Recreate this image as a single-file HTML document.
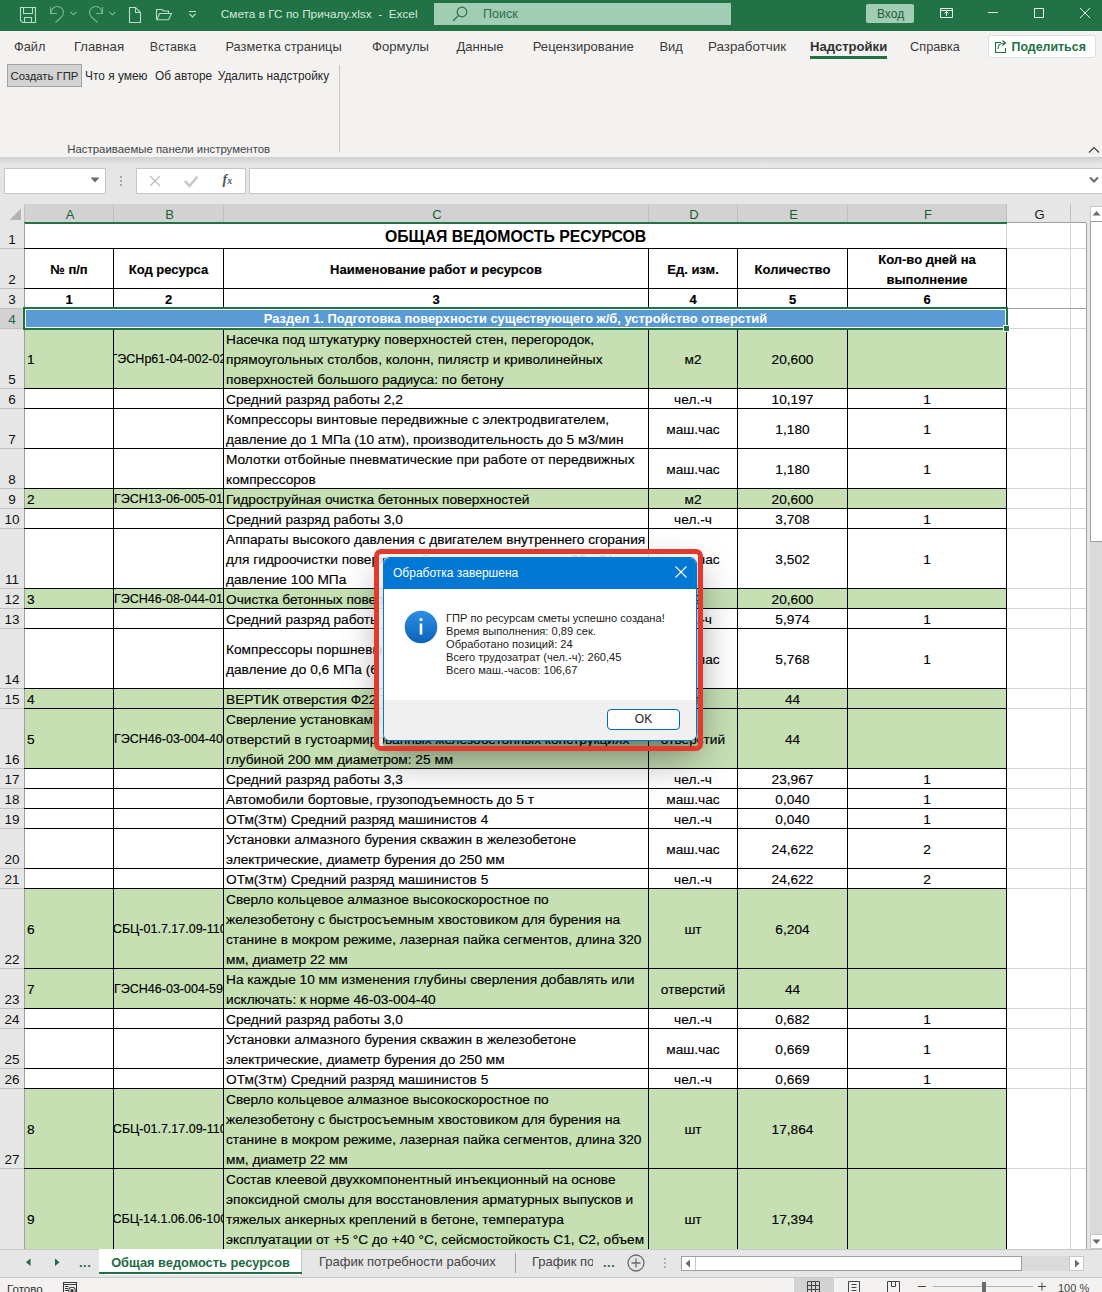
<!DOCTYPE html><html><head><meta charset="utf-8"><style>
*{box-sizing:border-box;margin:0;padding:0}
html,body{width:1102px;height:1292px;overflow:hidden;background:#fff}
body{position:relative;font-family:"Liberation Sans",sans-serif;color:#000}
.a{position:absolute}
.t{position:absolute;white-space:nowrap}
.cell{position:absolute;overflow:hidden;display:flex;flex-direction:column;justify-content:center}
.cell div{white-space:nowrap;height:20px;line-height:21px;font-size:13.7px;-webkit-text-stroke:0.15px #000}
.c div{display:flex;justify-content:center}
.b div{font-weight:bold;font-size:13px}
.code div{font-size:12.5px}
.hl{position:absolute;height:1px;background:#000}
.vl{position:absolute;width:1px;background:#000}

</style></head><body>
<div class="a" style="left:0;top:0;width:1102px;height:31px;background:#217346"></div>
<svg class="a" style="left:0;top:0" width="220" height="31" viewBox="0 0 220 31" fill="none" stroke-width="1.1">
<path d="M20.5 7.5H35.5V22.5H22.5L20.5 20.5Z" stroke="#b9dcc6"/>
<path d="M23.5 7.5V13.5H32.5V7.5" stroke="#b9dcc6"/>
<path d="M24.5 22.5V17.5H31.5V22.5" stroke="#b9dcc6"/>
<path d="M50.5 7V13.5H57" stroke="#7db593"/><path d="M51 13A6 6 0 0 1 63.5 12.5A6 6 0 0 1 61.5 17L55.5 22.5" stroke="#7db593"/>
<path d="M70.5 12L73.4 14.8L76.3 12" stroke="#7db593"/>
<path d="M102.5 7V13.5H96" stroke="#7db593"/><path d="M102 13A6 6 0 0 0 89.5 12.5A6 6 0 0 0 91.5 17L97.5 22.5" stroke="#7db593"/>
<path d="M109.5 12L112.4 14.8L115.3 12" stroke="#7db593"/>
<path d="M129.5 7.5H135.5L140.5 12.5V22.5H129.5Z" stroke="#b9dcc6"/><path d="M135.5 7.5V12.5H140.5" stroke="#b9dcc6"/>
<path d="M156.5 19.5V9.5H162L163.5 11H168.5V13.3" stroke="#b9dcc6"/><path d="M157 19.8L159.5 13.5H171.5L168.5 19.8Z" stroke="#b9dcc6"/>
<path d="M189 11.5H196" stroke="#b9dcc6"/><path d="M189.5 14L192.5 17L195.5 14" stroke="#b9dcc6"/>
</svg>
<div class="t" style="left:220.8px;top:6px;font-size:11.8px;line-height:16px;color:#d6e8dd">Смета в ГС по Причалу.xlsx&nbsp; -&nbsp; Excel</div>
<div class="a" style="left:434px;top:3px;width:297px;height:22px;background:#a0cdb4"></div>
<svg class="a" style="left:450px;top:5px" width="20" height="18" viewBox="0 0 20 18" fill="none" stroke="#2c6e49" stroke-width="1.2"><circle cx="12" cy="7" r="4.8"/><path d="M8.6 10.4L3 16"/></svg>
<div class="t" style="left:483px;top:6px;font-size:12.5px;line-height:16px;color:#2c6e49">Поиск</div>
<div class="a" style="left:866px;top:4px;width:48px;height:19px;background:#a0cdb4;border-radius:2px"></div>
<div class="t" style="left:877px;top:6px;font-size:12px;line-height:16px;color:#1f5c3a">Вход</div>
<svg class="a" style="left:930px;top:0" width="172" height="31" viewBox="930 0 172 31" fill="none" stroke="#e6f0ea" stroke-width="1">
<path d="M940.5 8.5h12v9h-12z"/><path d="M940.5 10.5h12"/><path d="M946.5 16v-4.5M944.5 13.5l2-2l2 2"/>
<path d="M988 12.5h10"/>
<path d="M1034.5 8.5h9v9h-9z"/>
<path d="M1080 8l10 10M1090 8l-10 10"/>
</svg>
<div class="a" style="left:0;top:31px;width:1102px;height:126px;background:#f3f2f1"></div>
<div class="t" style="left:14.0px;top:38.5px;font-size:12.8px;line-height:16px;color:#3b3a39">Файл</div>
<div class="t" style="left:73.9px;top:38.5px;font-size:13.2px;line-height:16px;color:#3b3a39">Главная</div>
<div class="t" style="left:149.8px;top:38.5px;font-size:12.5px;line-height:16px;color:#3b3a39">Вставка</div>
<div class="t" style="left:225.5px;top:38.5px;font-size:12.8px;line-height:16px;color:#3b3a39">Разметка страницы</div>
<div class="t" style="left:372.0px;top:38.5px;font-size:13.1px;line-height:16px;color:#3b3a39">Формулы</div>
<div class="t" style="left:456.5px;top:38.5px;font-size:13px;line-height:16px;color:#3b3a39">Данные</div>
<div class="t" style="left:532.7px;top:38.5px;font-size:13.1px;line-height:16px;color:#3b3a39">Рецензирование</div>
<div class="t" style="left:659.5px;top:38.5px;font-size:12.9px;line-height:16px;color:#3b3a39">Вид</div>
<div class="t" style="left:708.0px;top:38.5px;font-size:13.4px;line-height:16px;color:#3b3a39">Разработчик</div>
<div class="t" style="left:910.1px;top:38.5px;font-size:12.7px;line-height:16px;color:#3b3a39">Справка</div>
<div class="t" style="left:810px;top:38.5px;font-size:13.1px;line-height:16px;color:#323130;font-weight:bold">Надстройки</div>
<div class="a" style="left:810px;top:56px;width:77px;height:3px;background:#1e7145"></div>
<div class="a" style="left:987.5px;top:34.5px;width:108px;height:23.5px;background:#fff;border:1px solid #e1dfdd;border-radius:3px"></div>
<svg class="a" style="left:994px;top:38px" width="14" height="16" viewBox="0 0 14 16" fill="none" stroke="#1e7145" stroke-width="1.1"><path d="M7 4.5H1.5v10h10V10"/><path d="M4 11c0-4 3-6 7-6M8.5 2.5L11.5 5L8.5 7.5"/></svg>
<div class="t" style="left:1011.5px;top:39px;font-size:12.4px;line-height:16px;color:#1e7145;font-weight:bold">Поделиться</div>
<div class="a" style="left:7px;top:64px;width:75px;height:23px;background:#d2d2d2;border:1px solid #a3a3a3"></div>
<div class="t" style="left:10.5px;top:67.5px;font-size:11.3px;line-height:16px;color:#262626">Создать ГПР</div>
<div class="t" style="left:85px;top:67.5px;font-size:11.9px;line-height:16px;color:#262626">Что я умею</div>
<div class="t" style="left:155px;top:67.5px;font-size:11.9px;line-height:16px;color:#262626">Об авторе</div>
<div class="t" style="left:217.8px;top:67.5px;font-size:11.9px;line-height:16px;color:#262626">Удалить надстройку</div>
<div class="t" style="left:67.3px;top:142px;font-size:11.4px;line-height:14px;color:#444">Настраиваемые панели инструментов</div>
<div class="a" style="left:339px;top:65px;width:1px;height:87px;background:#c8c6c4"></div>
<svg class="a" style="left:1088px;top:146px" width="12" height="8" viewBox="0 0 12 8" fill="none" stroke="#3b3a39" stroke-width="1.1"><path d="M1 6.5L6 1.5L11 6.5"/></svg>
<div class="a" style="left:0;top:157px;width:1102px;height:47px;background:#e6e6e6"></div>
<div class="a" style="left:0;top:157px;width:1102px;height:7px;background:linear-gradient(#cfcfcf,#e6e6e6)"></div>
<div class="a" style="left:4px;top:168px;width:102px;height:26px;background:#fff;border:1px solid #c6c6c6"></div>
<svg class="a" style="left:90px;top:177px" width="11" height="6" viewBox="0 0 11 6"><path d="M0.5 0.5h9l-4.5 5z" fill="#6b6b6b"/></svg>
<div class="a" style="left:120px;top:176px;width:2px;height:2px;background:#a6a6a6"></div><div class="a" style="left:120px;top:180px;width:2px;height:2px;background:#a6a6a6"></div><div class="a" style="left:120px;top:184px;width:2px;height:2px;background:#a6a6a6"></div>
<div class="a" style="left:136px;top:168px;width:110px;height:26px;background:#fff;border:1px solid #c6c6c6"></div>
<svg class="a" style="left:136px;top:168px" width="110" height="26" viewBox="0 0 110 26" fill="none" stroke-width="1.3"><path d="M14 8l10 10M24 8l-10 10" stroke="#bdbdbd"/><path d="M49 13L53.5 18L61.5 8.5" stroke="#c8c8c8" stroke-width="2.6"/></svg>
<div class="t" style="left:222.5px;top:172px;font-family:'Liberation Serif',serif;font-style:italic;font-weight:bold;font-size:14px;line-height:16px;color:#555">f<span style="font-size:10px">x</span></div>
<div class="a" style="left:249px;top:168px;width:860px;height:26px;background:#fff;border:1px solid #c6c6c6"></div>
<svg class="a" style="left:1088px;top:176px" width="12" height="8" viewBox="0 0 12 8" fill="none" stroke="#6b6b6b" stroke-width="2"><path d="M2 1.5L6 5.5L10 1.5"/></svg>
<div class="a" style="left:0;top:204px;width:1087px;height:19px;background:#e6e6e6"></div>
<div class="a" style="left:0;top:223px;width:24px;height:1px;background:#bfbfbf"></div>
<div class="a" style="left:25px;top:204px;width:981px;height:18px;background:#d2d2d2"></div>
<svg class="a" style="left:0;top:204px" width="24" height="19" viewBox="0 0 24 19"><path d="M21 4.5V16H9.5z" fill="#b4b4b4"/></svg>
<div class="t" style="left:25.5px;top:207px;width:89px;text-align:center;font-size:13px;line-height:16px;color:#185f38">A</div>
<div class="t" style="left:114.5px;top:207px;width:110px;text-align:center;font-size:13px;line-height:16px;color:#185f38">B</div>
<div class="t" style="left:224.5px;top:207px;width:425px;text-align:center;font-size:13px;line-height:16px;color:#185f38">C</div>
<div class="t" style="left:649.5px;top:207px;width:89px;text-align:center;font-size:13px;line-height:16px;color:#185f38">D</div>
<div class="t" style="left:738.5px;top:207px;width:110px;text-align:center;font-size:13px;line-height:16px;color:#185f38">E</div>
<div class="t" style="left:848.5px;top:207px;width:159px;text-align:center;font-size:13px;line-height:16px;color:#185f38">F</div>
<div class="t" style="left:1007.5px;top:207px;width:64px;text-align:center;font-size:13px;line-height:16px;color:#222">G</div>
<div class="a" style="left:24px;top:204px;width:1px;height:19px;background:#bfbfbf"></div>
<div class="a" style="left:113px;top:204px;width:1px;height:19px;background:#bfbfbf"></div>
<div class="a" style="left:223px;top:204px;width:1px;height:19px;background:#bfbfbf"></div>
<div class="a" style="left:648px;top:204px;width:1px;height:19px;background:#bfbfbf"></div>
<div class="a" style="left:737px;top:204px;width:1px;height:19px;background:#bfbfbf"></div>
<div class="a" style="left:847px;top:204px;width:1px;height:19px;background:#bfbfbf"></div>
<div class="a" style="left:1006px;top:204px;width:1px;height:19px;background:#bfbfbf"></div>
<div class="a" style="left:1070px;top:204px;width:1px;height:19px;background:#bfbfbf"></div>
<div class="a" style="left:24px;top:222px;width:983px;height:2px;background:#217346"></div>
<div class="a" style="left:1007px;top:222px;width:79px;height:1px;background:#9e9e9e"></div>
<div class="a" style="left:0;top:223px;width:24px;height:1026px;background:#e6e6e6"></div>
<div class="a" style="left:24px;top:223px;width:1px;height:1026px;background:#9e9e9e"></div>
<div class="a" style="left:0;top:309px;width:24px;height:19px;background:#d2d2d2"></div>
<div class="a" style="left:25px;top:329px;width:981px;height:59px;background:#c6e0b4"></div>
<div class="a" style="left:25px;top:489px;width:981px;height:19px;background:#c6e0b4"></div>
<div class="a" style="left:25px;top:589px;width:981px;height:19px;background:#c6e0b4"></div>
<div class="a" style="left:25px;top:689px;width:981px;height:19px;background:#c6e0b4"></div>
<div class="a" style="left:25px;top:709px;width:981px;height:59px;background:#c6e0b4"></div>
<div class="a" style="left:25px;top:889px;width:981px;height:79px;background:#c6e0b4"></div>
<div class="a" style="left:25px;top:969px;width:981px;height:39px;background:#c6e0b4"></div>
<div class="a" style="left:25px;top:1089px;width:981px;height:79px;background:#c6e0b4"></div>
<div class="a" style="left:25px;top:1169px;width:981px;height:80px;background:#c6e0b4"></div>
<div class="a" style="left:1007px;top:248px;width:79px;height:1px;background:#d4d4d4"></div>
<div class="a" style="left:1007px;top:288px;width:79px;height:1px;background:#d4d4d4"></div>
<div class="a" style="left:1007px;top:308px;width:79px;height:1px;background:#d4d4d4"></div>
<div class="a" style="left:1007px;top:328px;width:79px;height:1px;background:#d4d4d4"></div>
<div class="a" style="left:1007px;top:388px;width:79px;height:1px;background:#d4d4d4"></div>
<div class="a" style="left:1007px;top:408px;width:79px;height:1px;background:#d4d4d4"></div>
<div class="a" style="left:1007px;top:448px;width:79px;height:1px;background:#d4d4d4"></div>
<div class="a" style="left:1007px;top:488px;width:79px;height:1px;background:#d4d4d4"></div>
<div class="a" style="left:1007px;top:508px;width:79px;height:1px;background:#d4d4d4"></div>
<div class="a" style="left:1007px;top:528px;width:79px;height:1px;background:#d4d4d4"></div>
<div class="a" style="left:1007px;top:588px;width:79px;height:1px;background:#d4d4d4"></div>
<div class="a" style="left:1007px;top:608px;width:79px;height:1px;background:#d4d4d4"></div>
<div class="a" style="left:1007px;top:628px;width:79px;height:1px;background:#d4d4d4"></div>
<div class="a" style="left:1007px;top:688px;width:79px;height:1px;background:#d4d4d4"></div>
<div class="a" style="left:1007px;top:708px;width:79px;height:1px;background:#d4d4d4"></div>
<div class="a" style="left:1007px;top:768px;width:79px;height:1px;background:#d4d4d4"></div>
<div class="a" style="left:1007px;top:788px;width:79px;height:1px;background:#d4d4d4"></div>
<div class="a" style="left:1007px;top:808px;width:79px;height:1px;background:#d4d4d4"></div>
<div class="a" style="left:1007px;top:828px;width:79px;height:1px;background:#d4d4d4"></div>
<div class="a" style="left:1007px;top:868px;width:79px;height:1px;background:#d4d4d4"></div>
<div class="a" style="left:1007px;top:888px;width:79px;height:1px;background:#d4d4d4"></div>
<div class="a" style="left:1007px;top:968px;width:79px;height:1px;background:#d4d4d4"></div>
<div class="a" style="left:1007px;top:1008px;width:79px;height:1px;background:#d4d4d4"></div>
<div class="a" style="left:1007px;top:1028px;width:79px;height:1px;background:#d4d4d4"></div>
<div class="a" style="left:1007px;top:1068px;width:79px;height:1px;background:#d4d4d4"></div>
<div class="a" style="left:1007px;top:1088px;width:79px;height:1px;background:#d4d4d4"></div>
<div class="a" style="left:1007px;top:1168px;width:79px;height:1px;background:#d4d4d4"></div>
<div class="a" style="left:1070px;top:224px;width:1px;height:1025px;background:#d4d4d4"></div>
<div class="a" style="left:1086px;top:223px;width:1px;height:1026px;background:#9e9e9e"></div>
<div class="a" style="left:1007px;top:308px;width:79px;height:1px;background:#a0a0a0"></div>
<div class="a" style="left:1006px;top:224px;width:1px;height:24px;background:#d4d4d4"></div>
<div class="a" style="left:0;top:248px;width:24px;height:1px;background:#bfbfbf"></div>
<div class="t" style="left:0;top:232px;width:24px;text-align:center;font-size:13.5px;line-height:16px;color:#111">1</div>
<div class="a" style="left:0;top:288px;width:24px;height:1px;background:#bfbfbf"></div>
<div class="t" style="left:0;top:272px;width:24px;text-align:center;font-size:13.5px;line-height:16px;color:#111">2</div>
<div class="a" style="left:0;top:308px;width:24px;height:1px;background:#bfbfbf"></div>
<div class="t" style="left:0;top:292px;width:24px;text-align:center;font-size:13.5px;line-height:16px;color:#111">3</div>
<div class="a" style="left:0;top:328px;width:24px;height:1px;background:#bfbfbf"></div>
<div class="t" style="left:0;top:312px;width:24px;text-align:center;font-size:13.5px;line-height:16px;color:#1e6b41">4</div>
<div class="a" style="left:0;top:388px;width:24px;height:1px;background:#bfbfbf"></div>
<div class="t" style="left:0;top:372px;width:24px;text-align:center;font-size:13.5px;line-height:16px;color:#111">5</div>
<div class="a" style="left:0;top:408px;width:24px;height:1px;background:#bfbfbf"></div>
<div class="t" style="left:0;top:392px;width:24px;text-align:center;font-size:13.5px;line-height:16px;color:#111">6</div>
<div class="a" style="left:0;top:448px;width:24px;height:1px;background:#bfbfbf"></div>
<div class="t" style="left:0;top:432px;width:24px;text-align:center;font-size:13.5px;line-height:16px;color:#111">7</div>
<div class="a" style="left:0;top:488px;width:24px;height:1px;background:#bfbfbf"></div>
<div class="t" style="left:0;top:472px;width:24px;text-align:center;font-size:13.5px;line-height:16px;color:#111">8</div>
<div class="a" style="left:0;top:508px;width:24px;height:1px;background:#bfbfbf"></div>
<div class="t" style="left:0;top:492px;width:24px;text-align:center;font-size:13.5px;line-height:16px;color:#111">9</div>
<div class="a" style="left:0;top:528px;width:24px;height:1px;background:#bfbfbf"></div>
<div class="t" style="left:0;top:512px;width:24px;text-align:center;font-size:13.5px;line-height:16px;color:#111">10</div>
<div class="a" style="left:0;top:588px;width:24px;height:1px;background:#bfbfbf"></div>
<div class="t" style="left:0;top:572px;width:24px;text-align:center;font-size:13.5px;line-height:16px;color:#111">11</div>
<div class="a" style="left:0;top:608px;width:24px;height:1px;background:#bfbfbf"></div>
<div class="t" style="left:0;top:592px;width:24px;text-align:center;font-size:13.5px;line-height:16px;color:#111">12</div>
<div class="a" style="left:0;top:628px;width:24px;height:1px;background:#bfbfbf"></div>
<div class="t" style="left:0;top:612px;width:24px;text-align:center;font-size:13.5px;line-height:16px;color:#111">13</div>
<div class="a" style="left:0;top:688px;width:24px;height:1px;background:#bfbfbf"></div>
<div class="t" style="left:0;top:672px;width:24px;text-align:center;font-size:13.5px;line-height:16px;color:#111">14</div>
<div class="a" style="left:0;top:708px;width:24px;height:1px;background:#bfbfbf"></div>
<div class="t" style="left:0;top:692px;width:24px;text-align:center;font-size:13.5px;line-height:16px;color:#111">15</div>
<div class="a" style="left:0;top:768px;width:24px;height:1px;background:#bfbfbf"></div>
<div class="t" style="left:0;top:752px;width:24px;text-align:center;font-size:13.5px;line-height:16px;color:#111">16</div>
<div class="a" style="left:0;top:788px;width:24px;height:1px;background:#bfbfbf"></div>
<div class="t" style="left:0;top:772px;width:24px;text-align:center;font-size:13.5px;line-height:16px;color:#111">17</div>
<div class="a" style="left:0;top:808px;width:24px;height:1px;background:#bfbfbf"></div>
<div class="t" style="left:0;top:792px;width:24px;text-align:center;font-size:13.5px;line-height:16px;color:#111">18</div>
<div class="a" style="left:0;top:828px;width:24px;height:1px;background:#bfbfbf"></div>
<div class="t" style="left:0;top:812px;width:24px;text-align:center;font-size:13.5px;line-height:16px;color:#111">19</div>
<div class="a" style="left:0;top:868px;width:24px;height:1px;background:#bfbfbf"></div>
<div class="t" style="left:0;top:852px;width:24px;text-align:center;font-size:13.5px;line-height:16px;color:#111">20</div>
<div class="a" style="left:0;top:888px;width:24px;height:1px;background:#bfbfbf"></div>
<div class="t" style="left:0;top:872px;width:24px;text-align:center;font-size:13.5px;line-height:16px;color:#111">21</div>
<div class="a" style="left:0;top:968px;width:24px;height:1px;background:#bfbfbf"></div>
<div class="t" style="left:0;top:952px;width:24px;text-align:center;font-size:13.5px;line-height:16px;color:#111">22</div>
<div class="a" style="left:0;top:1008px;width:24px;height:1px;background:#bfbfbf"></div>
<div class="t" style="left:0;top:992px;width:24px;text-align:center;font-size:13.5px;line-height:16px;color:#111">23</div>
<div class="a" style="left:0;top:1028px;width:24px;height:1px;background:#bfbfbf"></div>
<div class="t" style="left:0;top:1012px;width:24px;text-align:center;font-size:13.5px;line-height:16px;color:#111">24</div>
<div class="a" style="left:0;top:1068px;width:24px;height:1px;background:#bfbfbf"></div>
<div class="t" style="left:0;top:1052px;width:24px;text-align:center;font-size:13.5px;line-height:16px;color:#111">25</div>
<div class="a" style="left:0;top:1088px;width:24px;height:1px;background:#bfbfbf"></div>
<div class="t" style="left:0;top:1072px;width:24px;text-align:center;font-size:13.5px;line-height:16px;color:#111">26</div>
<div class="a" style="left:0;top:1168px;width:24px;height:1px;background:#bfbfbf"></div>
<div class="t" style="left:0;top:1152px;width:24px;text-align:center;font-size:13.5px;line-height:16px;color:#111">27</div>
<div class="hl" style="left:24px;top:248px;width:983px"></div>
<div class="hl" style="left:24px;top:288px;width:983px"></div>
<div class="hl" style="left:24px;top:308px;width:983px"></div>
<div class="hl" style="left:24px;top:328px;width:983px"></div>
<div class="hl" style="left:24px;top:388px;width:983px"></div>
<div class="hl" style="left:24px;top:408px;width:983px"></div>
<div class="hl" style="left:24px;top:448px;width:983px"></div>
<div class="hl" style="left:24px;top:488px;width:983px"></div>
<div class="hl" style="left:24px;top:508px;width:983px"></div>
<div class="hl" style="left:24px;top:528px;width:983px"></div>
<div class="hl" style="left:24px;top:588px;width:983px"></div>
<div class="hl" style="left:24px;top:608px;width:983px"></div>
<div class="hl" style="left:24px;top:628px;width:983px"></div>
<div class="hl" style="left:24px;top:688px;width:983px"></div>
<div class="hl" style="left:24px;top:708px;width:983px"></div>
<div class="hl" style="left:24px;top:768px;width:983px"></div>
<div class="hl" style="left:24px;top:788px;width:983px"></div>
<div class="hl" style="left:24px;top:808px;width:983px"></div>
<div class="hl" style="left:24px;top:828px;width:983px"></div>
<div class="hl" style="left:24px;top:868px;width:983px"></div>
<div class="hl" style="left:24px;top:888px;width:983px"></div>
<div class="hl" style="left:24px;top:968px;width:983px"></div>
<div class="hl" style="left:24px;top:1008px;width:983px"></div>
<div class="hl" style="left:24px;top:1028px;width:983px"></div>
<div class="hl" style="left:24px;top:1068px;width:983px"></div>
<div class="hl" style="left:24px;top:1088px;width:983px"></div>
<div class="hl" style="left:24px;top:1168px;width:983px"></div>
<div class="vl" style="left:113px;top:248px;height:1001px"></div>
<div class="vl" style="left:223px;top:248px;height:1001px"></div>
<div class="vl" style="left:648px;top:248px;height:1001px"></div>
<div class="vl" style="left:737px;top:248px;height:1001px"></div>
<div class="vl" style="left:847px;top:248px;height:1001px"></div>
<div class="vl" style="left:1006px;top:248px;height:1001px"></div>
<div class="t" style="left:25px;top:227px;width:981px;text-align:center;font-size:15.8px;line-height:20px;font-weight:bold">ОБЩАЯ ВЕДОМОСТЬ РЕСУРСОВ</div>
<div class="cell c b" style="left:25px;top:249px;width:88px;height:39px;"><div>№ п/п</div></div>
<div class="cell c b" style="left:114px;top:249px;width:109px;height:39px;"><div>Код ресурса</div></div>
<div class="cell c b" style="left:224px;top:249px;width:424px;height:39px;"><div>Наименование работ и ресурсов</div></div>
<div class="cell c b" style="left:649px;top:249px;width:88px;height:39px;"><div>Ед. изм.</div></div>
<div class="cell c b" style="left:738px;top:249px;width:109px;height:39px;"><div>Количество</div></div>
<div class="cell c b" style="left:848px;top:249px;width:158px;height:39px;"><div>Кол-во дней на</div><div>выполнение</div></div>
<div class="cell c b" style="left:25px;top:289px;width:88px;height:19px;"><div>1</div></div>
<div class="cell c b" style="left:114px;top:289px;width:109px;height:19px;"><div>2</div></div>
<div class="cell c b" style="left:224px;top:289px;width:424px;height:19px;"><div>3</div></div>
<div class="cell c b" style="left:649px;top:289px;width:88px;height:19px;"><div>4</div></div>
<div class="cell c b" style="left:738px;top:289px;width:109px;height:19px;"><div>5</div></div>
<div class="cell c b" style="left:848px;top:289px;width:158px;height:19px;"><div>6</div></div>
<div class="cell" style="left:25px;top:329px;width:88px;height:59px;padding-left:2px;"><div>1</div></div>
<div class="cell c code" style="left:114px;top:329px;width:109px;height:59px;"><div>ГЭСНр61-04-002-02</div></div>
<div class="cell" style="left:224px;top:329px;width:424px;height:59px;padding-left:2px;"><div>Насечка под штукатурку поверхностей стен, перегородок,</div><div>прямоугольных столбов, колонн, пилястр и криволинейных</div><div>поверхностей большого радиуса: по бетону</div></div>
<div class="cell c" style="left:649px;top:329px;width:88px;height:59px;"><div>м2</div></div>
<div class="cell c" style="left:738px;top:329px;width:109px;height:59px;"><div>20,600</div></div>
<div class="cell" style="left:224px;top:389px;width:424px;height:19px;padding-left:2px;"><div>Средний разряд работы 2,2</div></div>
<div class="cell c" style="left:649px;top:389px;width:88px;height:19px;"><div>чел.-ч</div></div>
<div class="cell c" style="left:738px;top:389px;width:109px;height:19px;"><div>10,197</div></div>
<div class="cell c" style="left:848px;top:389px;width:158px;height:19px;"><div>1</div></div>
<div class="cell" style="left:224px;top:409px;width:424px;height:39px;padding-left:2px;"><div>Компрессоры винтовые передвижные с электродвигателем,</div><div>давление до 1 МПа (10 атм), производительность до 5 м3/мин</div></div>
<div class="cell c" style="left:649px;top:409px;width:88px;height:39px;"><div>маш.час</div></div>
<div class="cell c" style="left:738px;top:409px;width:109px;height:39px;"><div>1,180</div></div>
<div class="cell c" style="left:848px;top:409px;width:158px;height:39px;"><div>1</div></div>
<div class="cell" style="left:224px;top:449px;width:424px;height:39px;padding-left:2px;"><div>Молотки отбойные пневматические при работе от передвижных</div><div>компрессоров</div></div>
<div class="cell c" style="left:649px;top:449px;width:88px;height:39px;"><div>маш.час</div></div>
<div class="cell c" style="left:738px;top:449px;width:109px;height:39px;"><div>1,180</div></div>
<div class="cell c" style="left:848px;top:449px;width:158px;height:39px;"><div>1</div></div>
<div class="cell" style="left:25px;top:489px;width:88px;height:19px;padding-left:2px;"><div>2</div></div>
<div class="cell c code" style="left:114px;top:489px;width:109px;height:19px;"><div>ГЭСН13-06-005-01</div></div>
<div class="cell" style="left:224px;top:489px;width:424px;height:19px;padding-left:2px;"><div>Гидроструйная очистка бетонных поверхностей</div></div>
<div class="cell c" style="left:649px;top:489px;width:88px;height:19px;"><div>м2</div></div>
<div class="cell c" style="left:738px;top:489px;width:109px;height:19px;"><div>20,600</div></div>
<div class="cell" style="left:224px;top:509px;width:424px;height:19px;padding-left:2px;"><div>Средний разряд работы 3,0</div></div>
<div class="cell c" style="left:649px;top:509px;width:88px;height:19px;"><div>чел.-ч</div></div>
<div class="cell c" style="left:738px;top:509px;width:109px;height:19px;"><div>3,708</div></div>
<div class="cell c" style="left:848px;top:509px;width:158px;height:19px;"><div>1</div></div>
<div class="cell" style="left:224px;top:529px;width:424px;height:59px;padding-left:2px;"><div>Аппараты высокого давления с двигателем внутреннего сгорания</div><div>для гидроочистки поверхностей, производительность 20 м3/ч,</div><div>давление 100 МПа</div></div>
<div class="cell c" style="left:649px;top:529px;width:88px;height:59px;"><div>маш.час</div></div>
<div class="cell c" style="left:738px;top:529px;width:109px;height:59px;"><div>3,502</div></div>
<div class="cell c" style="left:848px;top:529px;width:158px;height:59px;"><div>1</div></div>
<div class="cell" style="left:25px;top:589px;width:88px;height:19px;padding-left:2px;"><div>3</div></div>
<div class="cell c code" style="left:114px;top:589px;width:109px;height:19px;"><div>ГЭСН46-08-044-01</div></div>
<div class="cell" style="left:224px;top:589px;width:424px;height:19px;padding-left:2px;"><div>Очистка бетонных поверхностей пескоструйным</div></div>
<div class="cell c" style="left:649px;top:589px;width:88px;height:19px;"><div>м2</div></div>
<div class="cell c" style="left:738px;top:589px;width:109px;height:19px;"><div>20,600</div></div>
<div class="cell" style="left:224px;top:609px;width:424px;height:19px;padding-left:2px;"><div>Средний разряд работы 3,0</div></div>
<div class="cell c" style="left:649px;top:609px;width:88px;height:19px;"><div>чел.-ч</div></div>
<div class="cell c" style="left:738px;top:609px;width:109px;height:19px;"><div>5,974</div></div>
<div class="cell c" style="left:848px;top:609px;width:158px;height:19px;"><div>1</div></div>
<div class="cell" style="left:224px;top:629px;width:424px;height:59px;padding-left:2px;"><div>Компрессоры поршневые передвижные с</div><div>давление до 0,6 МПа (6 атм), производительность</div></div>
<div class="cell c" style="left:649px;top:629px;width:88px;height:59px;"><div>маш.час</div></div>
<div class="cell c" style="left:738px;top:629px;width:109px;height:59px;"><div>5,768</div></div>
<div class="cell c" style="left:848px;top:629px;width:158px;height:59px;"><div>1</div></div>
<div class="cell" style="left:25px;top:689px;width:88px;height:19px;padding-left:2px;"><div>4</div></div>
<div class="cell" style="left:224px;top:689px;width:424px;height:19px;padding-left:2px;"><div>ВЕРТИК отверстия Ф22 78 шт</div></div>
<div class="cell c" style="left:649px;top:689px;width:88px;height:19px;"><div>шт</div></div>
<div class="cell c" style="left:738px;top:689px;width:109px;height:19px;"><div>44</div></div>
<div class="cell" style="left:25px;top:709px;width:88px;height:59px;padding-left:2px;"><div>5</div></div>
<div class="cell c code" style="left:114px;top:709px;width:109px;height:59px;"><div>ГЭСН46-03-004-40</div></div>
<div class="cell" style="left:224px;top:709px;width:424px;height:59px;padding-left:2px;"><div>Сверление установками алмазного бурения в железобетоне</div><div>отверстий в густоармированных железобетонных конструкциях</div><div>глубиной 200 мм диаметром: 25 мм</div></div>
<div class="cell c" style="left:649px;top:709px;width:88px;height:59px;"><div>отверстий</div></div>
<div class="cell c" style="left:738px;top:709px;width:109px;height:59px;"><div>44</div></div>
<div class="cell" style="left:224px;top:769px;width:424px;height:19px;padding-left:2px;"><div>Средний разряд работы 3,3</div></div>
<div class="cell c" style="left:649px;top:769px;width:88px;height:19px;"><div>чел.-ч</div></div>
<div class="cell c" style="left:738px;top:769px;width:109px;height:19px;"><div>23,967</div></div>
<div class="cell c" style="left:848px;top:769px;width:158px;height:19px;"><div>1</div></div>
<div class="cell" style="left:224px;top:789px;width:424px;height:19px;padding-left:2px;"><div>Автомобили бортовые, грузоподъемность до 5 т</div></div>
<div class="cell c" style="left:649px;top:789px;width:88px;height:19px;"><div>маш.час</div></div>
<div class="cell c" style="left:738px;top:789px;width:109px;height:19px;"><div>0,040</div></div>
<div class="cell c" style="left:848px;top:789px;width:158px;height:19px;"><div>1</div></div>
<div class="cell" style="left:224px;top:809px;width:424px;height:19px;padding-left:2px;"><div>ОТм(Зтм) Средний разряд машинистов 4</div></div>
<div class="cell c" style="left:649px;top:809px;width:88px;height:19px;"><div>чел.-ч</div></div>
<div class="cell c" style="left:738px;top:809px;width:109px;height:19px;"><div>0,040</div></div>
<div class="cell c" style="left:848px;top:809px;width:158px;height:19px;"><div>1</div></div>
<div class="cell" style="left:224px;top:829px;width:424px;height:39px;padding-left:2px;"><div>Установки алмазного бурения скважин в железобетоне</div><div>электрические, диаметр бурения до 250 мм</div></div>
<div class="cell c" style="left:649px;top:829px;width:88px;height:39px;"><div>маш.час</div></div>
<div class="cell c" style="left:738px;top:829px;width:109px;height:39px;"><div>24,622</div></div>
<div class="cell c" style="left:848px;top:829px;width:158px;height:39px;"><div>2</div></div>
<div class="cell" style="left:224px;top:869px;width:424px;height:19px;padding-left:2px;"><div>ОТм(Зтм) Средний разряд машинистов 5</div></div>
<div class="cell c" style="left:649px;top:869px;width:88px;height:19px;"><div>чел.-ч</div></div>
<div class="cell c" style="left:738px;top:869px;width:109px;height:19px;"><div>24,622</div></div>
<div class="cell c" style="left:848px;top:869px;width:158px;height:19px;"><div>2</div></div>
<div class="cell" style="left:25px;top:889px;width:88px;height:79px;padding-left:2px;"><div>6</div></div>
<div class="cell c code" style="left:114px;top:889px;width:109px;height:79px;"><div>ФСБЦ-01.7.17.09-1101</div></div>
<div class="cell" style="left:224px;top:889px;width:424px;height:79px;padding-left:2px;"><div>Сверло кольцевое алмазное высокоскоростное по</div><div>железобетону с быстросъемным хвостовиком для бурения на</div><div>станине в мокром режиме, лазерная пайка сегментов, длина 320</div><div>мм, диаметр 22 мм</div></div>
<div class="cell c" style="left:649px;top:889px;width:88px;height:79px;"><div>шт</div></div>
<div class="cell c" style="left:738px;top:889px;width:109px;height:79px;"><div>6,204</div></div>
<div class="cell" style="left:25px;top:969px;width:88px;height:39px;padding-left:2px;"><div>7</div></div>
<div class="cell c code" style="left:114px;top:969px;width:109px;height:39px;"><div>ГЭСН46-03-004-59</div></div>
<div class="cell" style="left:224px;top:969px;width:424px;height:39px;padding-left:2px;"><div>На каждые 10 мм изменения глубины сверления добавлять или</div><div>исключать: к норме 46-03-004-40</div></div>
<div class="cell c" style="left:649px;top:969px;width:88px;height:39px;"><div>отверстий</div></div>
<div class="cell c" style="left:738px;top:969px;width:109px;height:39px;"><div>44</div></div>
<div class="cell" style="left:224px;top:1009px;width:424px;height:19px;padding-left:2px;"><div>Средний разряд работы 3,0</div></div>
<div class="cell c" style="left:649px;top:1009px;width:88px;height:19px;"><div>чел.-ч</div></div>
<div class="cell c" style="left:738px;top:1009px;width:109px;height:19px;"><div>0,682</div></div>
<div class="cell c" style="left:848px;top:1009px;width:158px;height:19px;"><div>1</div></div>
<div class="cell" style="left:224px;top:1029px;width:424px;height:39px;padding-left:2px;"><div>Установки алмазного бурения скважин в железобетоне</div><div>электрические, диаметр бурения до 250 мм</div></div>
<div class="cell c" style="left:649px;top:1029px;width:88px;height:39px;"><div>маш.час</div></div>
<div class="cell c" style="left:738px;top:1029px;width:109px;height:39px;"><div>0,669</div></div>
<div class="cell c" style="left:848px;top:1029px;width:158px;height:39px;"><div>1</div></div>
<div class="cell" style="left:224px;top:1069px;width:424px;height:19px;padding-left:2px;"><div>ОТм(Зтм) Средний разряд машинистов 5</div></div>
<div class="cell c" style="left:649px;top:1069px;width:88px;height:19px;"><div>чел.-ч</div></div>
<div class="cell c" style="left:738px;top:1069px;width:109px;height:19px;"><div>0,669</div></div>
<div class="cell c" style="left:848px;top:1069px;width:158px;height:19px;"><div>1</div></div>
<div class="cell" style="left:25px;top:1089px;width:88px;height:79px;padding-left:2px;"><div>8</div></div>
<div class="cell c code" style="left:114px;top:1089px;width:109px;height:79px;"><div>ФСБЦ-01.7.17.09-1101</div></div>
<div class="cell" style="left:224px;top:1089px;width:424px;height:79px;padding-left:2px;"><div>Сверло кольцевое алмазное высокоскоростное по</div><div>железобетону с быстросъемным хвостовиком для бурения на</div><div>станине в мокром режиме, лазерная пайка сегментов, длина 320</div><div>мм, диаметр 22 мм</div></div>
<div class="cell c" style="left:649px;top:1089px;width:88px;height:79px;"><div>шт</div></div>
<div class="cell c" style="left:738px;top:1089px;width:109px;height:79px;"><div>17,864</div></div>
<div class="cell" style="left:25px;top:1169px;width:88px;height:99px;padding-left:2px;"><div>9</div></div>
<div class="cell c code" style="left:114px;top:1169px;width:109px;height:99px;"><div>ФСБЦ-14.1.06.06-1001</div></div>
<div class="cell" style="left:224px;top:1169px;width:424px;height:99px;padding-left:2px;"><div>Состав клеевой двухкомпонентный инъекционный на основе</div><div>эпоксидной смолы для восстановления арматурных выпусков и</div><div>тяжелых анкерных креплений в бетоне, температура</div><div>эксплуатации от +5 °С до +40 °С, сейсмостойкость С1, С2, объем</div><div>упаковки 1 л</div></div>
<div class="cell c" style="left:649px;top:1169px;width:88px;height:99px;"><div>шт</div></div>
<div class="cell c" style="left:738px;top:1169px;width:109px;height:99px;"><div>17,394</div></div>
<div class="a" style="left:23px;top:307px;width:985px;height:23px;border:2px solid #217346;background:#fff"></div>
<div class="a" style="left:26px;top:310px;width:979px;height:17px;background:#5b9bd5"></div>
<div class="t" style="left:26px;top:310px;width:979px;text-align:center;font-size:12.9px;line-height:18px;font-weight:bold;color:#fff">Раздел 1. Подготовка поверхности существующего ж/б, устройство отверстий</div>
<div class="a" style="left:1003px;top:325px;width:7px;height:7px;background:#fff"></div>
<div class="a" style="left:1004px;top:326px;width:5px;height:5px;background:#217346"></div>
<div class="a" style="left:1087px;top:204px;width:15px;height:1045px;background:#e6e6e6"></div>
<div class="a" style="left:1090px;top:206px;width:12px;height:16px;background:#fff;border:1px solid #c6c6c6;border-right:0"></div>
<svg class="a" style="left:1092px;top:210px" width="9" height="6" viewBox="0 0 9 6"><path d="M0.5 5.5L4.5 1L8.5 5.5z" fill="#6b6b6b"/></svg>
<div class="a" style="left:1090px;top:221px;width:12px;height:321px;background:#fff;border:1px solid #9e9e9e;border-right:0"></div>
<div class="a" style="left:1090px;top:542px;width:12px;height:692px;background:#dadada"></div>
<div class="a" style="left:1090px;top:1234px;width:12px;height:15px;background:#fff;border:1px solid #c6c6c6;border-right:0"></div>
<svg class="a" style="left:1092px;top:1239px" width="9" height="6" viewBox="0 0 9 6"><path d="M0.5 0.5L4.5 5L8.5 0.5z" fill="#6b6b6b"/></svg>
<div class="a" style="left:383px;top:557px;width:314px;height:184px;border-radius:8px;box-shadow:0 16px 40px rgba(0,0,0,0.42),0 4px 12px rgba(0,0,0,0.15);background:#fff"></div>
<div class="a" style="left:379px;top:554px;width:318px;height:4px;background:rgba(245,245,245,0.85)"></div><div class="a" style="left:379px;top:558px;width:4px;height:188px;background:rgba(245,245,245,0.85)"></div>
<div class="a" style="left:383px;top:557px;width:314px;height:184px;border-radius:7px;overflow:hidden;border:1px solid #0078d4;background:#fff"><div class="a" style="left:0;top:0;width:312px;height:31px;background:#0078d4"></div><div class="a" style="left:0;top:142px;width:312px;height:41px;background:#f0f0f0"></div></div>
<div class="t" style="left:393px;top:565px;font-size:12px;line-height:16px;color:#fff">Обработка завершена</div>
<svg class="a" style="left:674px;top:565px" width="14" height="14" viewBox="0 0 14 14" fill="none" stroke="#fff" stroke-width="1.1"><path d="M1.5 1.5l11 11M12.5 1.5l-11 11"/></svg>
<svg class="a" style="left:404px;top:610px" width="34" height="34" viewBox="0 0 34 34"><defs><linearGradient id="ig" x1="0" y1="0" x2="0" y2="1"><stop offset="0" stop-color="#2b90e4"/><stop offset="1" stop-color="#0c62b8"/></linearGradient></defs><circle cx="17" cy="17" r="16.3" fill="url(#ig)"/><rect x="15.7" y="13.5" width="2.6" height="11" fill="#fff"/><circle cx="17" cy="9.5" r="1.6" fill="#fff"/></svg>
<div class="t" style="left:446px;top:612px;font-size:11.1px;line-height:13px;color:#1a1a1a">ГПР по ресурсам сметы успешно создана!</div>
<div class="t" style="left:446px;top:625px;font-size:11.1px;line-height:13px;color:#1a1a1a">Время выполнения: 0,89 сек.</div>
<div class="t" style="left:446px;top:638px;font-size:11.1px;line-height:13px;color:#1a1a1a">Обработано позиций: 24</div>
<div class="t" style="left:446px;top:651px;font-size:11.1px;line-height:13px;color:#1a1a1a">Всего трудозатрат (чел.-ч): 260,45</div>
<div class="t" style="left:446px;top:664px;font-size:11.1px;line-height:13px;color:#1a1a1a">Всего маш.-часов: 106,67</div>
<div class="a" style="left:607px;top:709px;width:73px;height:21px;background:#fdfdfd;border:1px solid #0067c0;border-radius:4px"></div>
<div class="t" style="left:607px;top:712px;width:73px;text-align:center;font-size:12px;line-height:15px;color:#1a1a1a">OK</div>
<div class="a" style="left:374px;top:549px;width:329px;height:202px;border:5px solid #e23b2e;border-radius:7px"></div>
<div class="a" style="left:0;top:1249px;width:1102px;height:1px;background:#c6c6c6"></div>
<div class="a" style="left:0;top:1250px;width:1102px;height:27px;background:#e6e6e6"></div>
<svg class="a" style="left:20px;top:1255px" width="45" height="14" viewBox="20 1255 45 14"><path d="M30.5 1258.5v7.5l-4.5-3.75z" fill="#1e6b41"/><path d="M55 1258.5v7.5l4.5-3.75z" fill="#1e6b41"/></svg>
<div class="t" style="left:79px;top:1255px;font-size:13px;line-height:16px;color:#1e6b41;font-weight:bold;letter-spacing:0.5px">...</div>
<div class="a" style="left:99px;top:1249px;width:203px;height:26px;background:#fff;border-right:1px solid #c6c6c6"></div>
<div class="a" style="left:99px;top:1272px;width:203px;height:2px;background:#1e7145"></div>
<div class="t" style="left:99px;top:1255px;width:203px;text-align:center;font-size:12.8px;line-height:16px;color:#1e6b41;font-weight:bold">Общая ведомость ресурсов</div>
<div class="t" style="left:319px;top:1254px;font-size:13px;line-height:16px;color:#444">График потребности рабочих</div>
<div class="a" style="left:515px;top:1253px;width:1px;height:20px;background:#9e9e9e"></div>
<div class="t" style="left:532px;top:1254px;width:61px;overflow:hidden;font-size:13px;line-height:16px;color:#444">График потребности</div>
<div class="t" style="left:603px;top:1255px;font-size:13px;line-height:16px;color:#1e6b41;font-weight:bold;letter-spacing:0.5px">...</div>
<svg class="a" style="left:626px;top:1253px" width="20" height="20" viewBox="0 0 20 20" fill="none" stroke="#6b6b6b" stroke-width="1.3"><circle cx="10" cy="10" r="8"/><path d="M10 5.5v9M5.5 10h9"/></svg>
<div class="a" style="left:664px;top:1258px;width:2px;height:2px;background:#b0b0b0"></div><div class="a" style="left:664px;top:1262px;width:2px;height:2px;background:#b0b0b0"></div><div class="a" style="left:664px;top:1266px;width:2px;height:2px;background:#b0b0b0"></div>
<div class="a" style="left:681px;top:1256px;width:403px;height:15px;background:#dadada"></div>
<div class="a" style="left:681px;top:1256px;width:341px;height:15px;background:#fff;border:1px solid #9e9e9e"></div>
<div class="a" style="left:695px;top:1257px;width:1px;height:13px;background:#c6c6c6"></div>
<svg class="a" style="left:684px;top:1259px" width="8" height="9" viewBox="0 0 8 9"><path d="M6 0.5v8L1.5 4.5z" fill="#6b6b6b"/></svg>
<div class="a" style="left:1069px;top:1256px;width:15px;height:15px;background:#fff;border:1px solid #c6c6c6"></div>
<svg class="a" style="left:1073px;top:1259px" width="8" height="9" viewBox="0 0 8 9"><path d="M2 0.5v8L6.5 4.5z" fill="#6b6b6b"/></svg>
<div class="a" style="left:0;top:1277px;width:1102px;height:1px;background:#c8c8c8"></div>
<div class="a" style="left:0;top:1278px;width:1102px;height:14px;background:#f3f2f1"></div>
<div class="t" style="left:7px;top:1281px;font-size:11.6px;line-height:16px;color:#333">Готово</div>
<svg class="a" style="left:62px;top:1281px" width="16" height="11" viewBox="0 0 16 11" fill="none" stroke="#3a3a3a" stroke-width="1.1"><path d="M1.5 11V1.5H14.5V11"/><path d="M1.5 3.5H14.5M3 5.5H6.5M3 7.5H6M3 9.5H6"/><circle cx="10" cy="9.6" r="3.3" fill="#f3f2f1"/><circle cx="10" cy="9.6" r="1.7" fill="#3a3a3a" stroke="none"/></svg>
<div class="a" style="left:794px;top:1278px;width:40px;height:14px;background:#d2d2d2"></div>
<svg class="a" style="left:800px;top:1278px" width="302" height="14" viewBox="800 1278 302 14" fill="none" stroke="#444" stroke-width="1">
<path d="M807.5 1292v-10.5h12v10.5M807.5 1285.5h12M807.5 1289.5h12M811.5 1281.5v10.5M815.5 1281.5v10.5"/>
<path d="M848.5 1292v-10.5h11v10.5M851.5 1284.5h5M851.5 1287.5h5M851.5 1290.5h5"/>
<path d="M887.5 1292v-10.5h12v10.5M891.5 1281.5v5h4v-5"/>
<path d="M918 1286.5h8M933 1286.5h99"/>
<path d="M1038 1286.5h8M1042 1282.5v8"/>
</svg>
<div class="a" style="left:933px;top:1286px;width:100px;height:1px;background:#b0b0b0"></div>
<div class="a" style="left:982px;top:1282px;width:4px;height:10px;background:#6b6b6b"></div>
<div class="t" style="left:1058px;top:1280px;font-size:11px;line-height:16px;color:#444">100 %</div>
</body></html>
